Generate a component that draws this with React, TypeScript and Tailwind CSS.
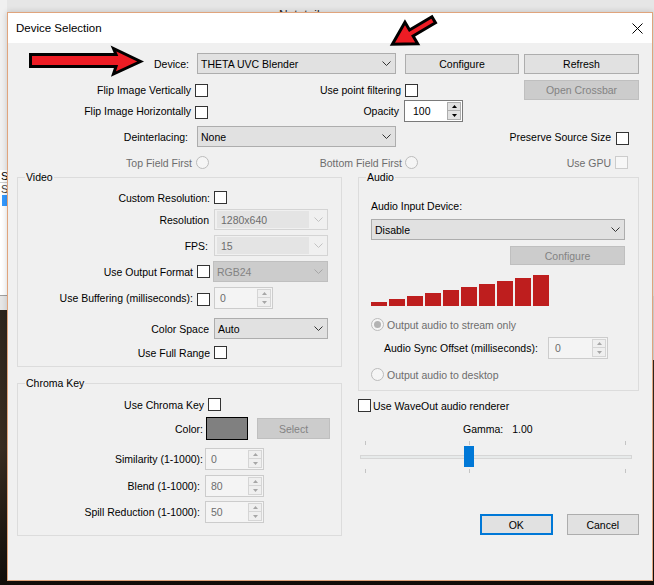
import React from "react";

type Kind = "normal" | "disabled" | "gray";

function Check({ disabled = false, className = "" }: { disabled?: boolean; className?: string }) {
  return (
    <div
      className={`w-[13px] h-[13px] shrink-0 border ${
        disabled ? "border-[#cccccc] bg-[#f7f7f7]" : "border-[#333333] bg-white"
      } ${className}`}
    />
  );
}

function Radio({ checked = false, className = "" }: { checked?: boolean; className?: string }) {
  return (
    <div
      className={`w-[13px] h-[13px] shrink-0 rounded-full border border-[#bcbcbc] bg-[#f5f5f5] flex items-center justify-center ${className}`}
    >
      {checked && <div className="w-[7px] h-[7px] rounded-full bg-[#b3b3b3]" />}
    </div>
  );
}

function Chevron({ color = "#333333" }: { color?: string }) {
  return (
    <svg width="9" height="5" viewBox="0 0 9 5">
      <polyline points="0.5,0.5 4.5,4.5 8.5,0.5" fill="none" stroke={color} strokeWidth="1" />
    </svg>
  );
}

function Combo({ value, kind = "normal", className = "" }: { value: string; kind?: Kind; className?: string }) {
  if (kind === "disabled") {
    return (
      <div className={`h-[21px] flex items-center border border-[#d4d4d4] bg-[#f0f0f0] ${className}`}>
        <div className="flex-1 h-[17px] ml-[2px] pl-[4px] flex items-center bg-[#e4e4e4] text-[#6d6d6d]">{value}</div>
        <div className="w-[18px] flex justify-center">
          <Chevron color="#c2c2c2" />
        </div>
      </div>
    );
  }
  if (kind === "gray") {
    return (
      <div className={`h-[21px] flex items-center border border-[#bfbfbf] bg-[#cccccc] text-[#838383] ${className}`}>
        <div className="flex-1 pl-[3px]">{value}</div>
        <div className="w-[18px] flex justify-center">
          <Chevron color="#a6a6a6" />
        </div>
      </div>
    );
  }
  return (
    <div className={`h-[21px] flex items-center border border-[#adadad] bg-[#e1e1e1] ${className}`}>
      <div className="flex-1 pl-[3px]">{value}</div>
      <div className="w-[18px] flex justify-center">
        <Chevron />
      </div>
    </div>
  );
}

function Btn({
  children,
  disabled = false,
  className = "",
}: {
  children: React.ReactNode;
  disabled?: boolean;
  className?: string;
}) {
  return (
    <button
      className={`flex items-center justify-center border ${
        disabled ? "bg-[#cccccc] border-[#bfbfbf] text-[#838383]" : "bg-[#e1e1e1] border-[#adadad]"
      } ${className}`}
    >
      {children}
    </button>
  );
}

function Tri({ up, color }: { up: boolean; color: string }) {
  return (
    <svg width="5" height="3" viewBox="0 0 5 3">
      <polygon points={up ? "0,3 2.5,0 5,3" : "0,0 5,0 2.5,3"} fill={color} />
    </svg>
  );
}

function Spin({
  value,
  disabled = false,
  className = "",
  textClass = "pl-[5px]",
}: {
  value: string;
  disabled?: boolean;
  className?: string;
  textClass?: string;
}) {
  const btn = disabled ? "border-[#d5d5d5] bg-[#efefef]" : "border-[#adadad] bg-[#e1e1e1]";
  const tri = disabled ? "#a6a6a6" : "#000000";
  return (
    <div
      className={`h-[22px] flex border ${
        disabled ? "border-[#cccccc] bg-[#f4f4f4] text-[#6d6d6d]" : "border-[#7a7a7a] bg-white"
      } ${className}`}
    >
      <div className={`flex-1 flex items-center ${textClass}`}>{value}</div>
      <div className="w-[14px] my-[1px] mr-[1px] flex flex-col">
        <div className={`h-[9px] border flex items-center justify-center ${btn}`}>
          <Tri up color={tri} />
        </div>
        <div className={`h-[9px] border border-t-0 flex items-center justify-center ${btn}`}>
          <Tri up={false} color={tri} />
        </div>
      </div>
    </div>
  );
}

function Group({ title, className = "", children }: { title: string; className?: string; children: React.ReactNode }) {
  return (
    <div className={`relative border border-[#dcdcdc] ${className}`}>
      <span className="absolute -top-[8px] left-[7px] px-[1px] bg-[#f0f0f0] leading-[14px]">{title}</span>
      {children}
    </div>
  );
}

const bars = [4, 7, 10, 13, 16, 19, 22, 25, 28, 31];

export default function App() {
  return (
    <div className="relative w-[654px] h-[585px] overflow-hidden bg-[#e6e6e6] font-['Liberation_Sans',Arial,sans-serif] text-[10.5px] leading-[14px] text-black">
      {/* desktop behind the dialog */}
      <div className="absolute left-[279px] top-[8px] text-[12px] text-[#222]">Notatnik</div>
      <div className="absolute left-0 top-0 w-[7px] h-[170px] bg-[#f0f0f0]" />
      <div className="absolute left-0 top-[170px] w-[7px] h-[126px] bg-white border-b border-[#a0a0a0] overflow-hidden text-[11px]">
        <div className="h-[13px] border-b border-[#cfcfcf] pl-[1px] leading-[13px]">S</div>
        <div className="pl-[1px] leading-[12px] text-[#444]">S</div>
        <div className="ml-[2px] w-[5px] h-[11px] bg-[#3399ff]" />
      </div>
      <div className="absolute left-0 top-[310px] w-[654px] h-[275px] bg-gradient-to-b from-[#2e251c] via-[#3a2d21] to-[#120e0a]" />
      <div className="absolute right-0 top-[296px] w-[1px] h-[64px] bg-[#d8d8d8]" />

      {/* dialog window */}
      <div className="absolute left-[7px] top-[12px] w-[646px] h-[569px] border border-[#e0a47c] bg-[#f0f0f0] shadow-[0_0_6px_rgba(0,0,0,0.18)] flex flex-col">
        <div className="h-[30px] shrink-0 bg-white flex items-center justify-between pl-[8px] pr-[9px]">
          <span className="text-[11.5px]">Device Selection</span>
          <svg width="11" height="11" viewBox="0 0 11 11">
            <path d="M0.5 0.5 L10.5 10.5 M10.5 0.5 L0.5 10.5" stroke="#000" strokeWidth="1" />
          </svg>
        </div>

        <div className="flex flex-col pt-[10px]">
          <div className="flex items-center h-[21px]">
            <div className="w-[184px] text-right pr-[3px]">Device:</div>
            <Combo className="ml-[5px] w-[199px]" value="THETA UVC Blender" />
            <Btn className="ml-[9px] w-[114px] h-[20px]">Configure</Btn>
            <Btn className="ml-[5px] w-[115px] h-[20px]">Refresh</Btn>
          </div>

          <div className="flex items-center h-[20px] mt-[6px]">
            <div className="w-[184px] text-right pr-[1px]">Flip Image Vertically</div>
            <Check className="ml-[3px]" />
            <div className="w-[194px] text-right pr-[1px]">Use point filtering</div>
            <Check className="ml-[3px]" />
            <Btn disabled className="ml-[106px] w-[115px] h-[20px]">
              Open Crossbar
            </Btn>
          </div>

          <div className="flex items-center h-[22px]">
            <div className="w-[184px] text-right pr-[1px]">Flip Image Horizontally</div>
            <Check className="ml-[3px] mt-[3px]" />
            <div className="w-[192px] text-right pr-[1px]">Opacity</div>
            <Spin className="ml-[4px] w-[59px]" value="100" textClass="pl-[8px]" />
          </div>

          <div className="flex items-center h-[21px] mt-[4px]">
            <div className="w-[184px] text-right pr-[4px]">Deinterlacing:</div>
            <Combo className="ml-[5px] w-[199px]" value="None" />
            <div className="w-[216px] text-right pr-[1px]">Preserve Source Size</div>
            <Check className="ml-[4px] mt-[4px]" />
          </div>

          <div className="flex items-center h-[13px] mt-[9px] text-[#6d6d6d]">
            <div className="w-[184px] text-right">Top Field First</div>
            <Radio className="ml-[4px]" />
            <div className="w-[193px] text-right">Bottom Field First</div>
            <Radio className="ml-[3px]" />
            <div className="w-[196px] text-right pr-[3px]">Use GPU</div>
            <Check disabled className="ml-[1px]" />
          </div>
        </div>

        <div className="flex mt-[8px] pl-[9px]">
          <div className="w-[325px] flex flex-col">
            <Group title="Video" className="h-[190px] flex flex-col">
              <div className="flex items-center h-[13px] mt-[13px]">
                <div className="w-[192px] text-right">Custom Resolution:</div>
                <Check className="ml-[4px]" />
              </div>
              <div className="flex items-center h-[21px] mt-[5px]">
                <div className="w-[192px] text-right pr-[1px]">Resolution</div>
                <Combo kind="disabled" className="ml-[4px] w-[114px]" value="1280x640" />
              </div>
              <div className="flex items-center h-[21px] mt-[5px]">
                <div className="w-[192px] text-right pr-[2px]">FPS:</div>
                <Combo kind="disabled" className="ml-[4px] w-[114px]" value="15" />
              </div>
              <div className="flex items-center h-[21px] mt-[5px]">
                <div className="w-[176px] text-right pr-[1px]">Use Output Format</div>
                <Check className="ml-[3px]" />
                <Combo kind="gray" className="ml-[3px] w-[115px]" value="RGB24" />
              </div>
              <div className="flex items-center h-[22px] mt-[5px]">
                <div className="w-[176px] text-right pr-[1px]">Use Buffering (milliseconds):</div>
                <Check className="ml-[3px] mt-[3px]" />
                <Spin disabled className="ml-[4px] w-[59px]" value="0" textClass="pl-[5px]" />
              </div>
              <div className="flex items-center h-[21px] mt-[9px]">
                <div className="w-[192px] text-right pr-[1px]">Color Space</div>
                <Combo className="ml-[4px] w-[114px]" value="Auto" />
              </div>
              <div className="flex items-center h-[13px] mt-[7px]">
                <div className="w-[192px] text-right">Use Full Range</div>
                <Check className="ml-[4px]" />
              </div>
            </Group>

            <Group title="Chroma Key" className="h-[153px] mt-[16px] flex flex-col">
              <div className="flex items-center h-[13px] mt-[14px]">
                <div className="w-[186px] text-right">Use Chroma Key</div>
                <Check className="ml-[4px]" />
              </div>
              <div className="flex items-center h-[23px] mt-[6px]">
                <div className="w-[186px] text-right pr-[1px]">Color:</div>
                <div className="ml-[2px] w-[42px] h-[23px] bg-[#808080] border border-black" />
                <Btn disabled className="ml-[9px] w-[73px] h-[21px]">
                  Select
                </Btn>
              </div>
              <div className="flex items-center h-[22px] mt-[8px]">
                <div className="w-[186px] text-right pr-[1px]">Similarity (1-1000):</div>
                <Spin disabled className="ml-[1px] w-[59px]" value="0" />
              </div>
              <div className="flex items-center h-[22px] mt-[5px]">
                <div className="w-[186px] text-right pr-[4px]">Blend (1-1000):</div>
                <Spin disabled className="ml-[1px] w-[59px]" value="80" />
              </div>
              <div className="flex items-center h-[22px] mt-[4px]">
                <div className="w-[186px] text-right pr-[4px]">Spill Reduction (1-1000):</div>
                <Spin disabled className="ml-[1px] w-[59px]" value="50" />
              </div>
            </Group>
          </div>

          <div className="ml-[16px] w-[281px] flex flex-col">
            <Group title="Audio" className="h-[214px] flex flex-col pl-[12px] pr-[13px]">
              <div className="mt-[21px]">Audio Input Device:</div>
              <Combo className="mt-[6px] w-[254px]" value="Disable" />
              <Btn disabled className="mt-[6px] self-end w-[115px] h-[19px]">
                Configure
              </Btn>
              <div className="mt-[10px] h-[31px] flex items-end gap-[2px]">
                {bars.map((h) => (
                  <div key={h} className="w-[16px] bg-[#be1e1e]" style={{ height: h }} />
                ))}
              </div>
              <div className="mt-[12px] flex items-center h-[13px] text-[#6d6d6d]">
                <Radio checked />
                <span className="ml-[3px]">Output audio to stream only</span>
              </div>
              <div className="mt-[6px] flex items-center h-[22px]">
                <div className="ml-[13px] w-[164px]">Audio Sync Offset (milliseconds):</div>
                <Spin disabled className="w-[60px]" value="0" textClass="pl-[6px]" />
              </div>
              <div className="mt-[9px] flex items-center h-[13px] text-[#6d6d6d]">
                <Radio />
                <span className="ml-[3px]">Output audio to desktop</span>
              </div>
            </Group>

            <div className="mt-[8px] flex items-center h-[13px]">
              <Check />
              <span className="ml-[2px]">Use WaveOut audio renderer</span>
            </div>

            <div className="mt-[9px] h-[15px] flex items-center">
              <span className="ml-[105px]">Gamma:</span>
              <span className="ml-[9px]">1.00</span>
            </div>

            <div className="mt-[5px] ml-[2px] relative w-[272px] h-[33px]">
              <div className="absolute left-[5px] top-0 w-[1px] h-[4px] bg-[#c4c4c4]" />
              <div className="absolute left-[109px] top-0 w-[1px] h-[4px] bg-[#c4c4c4]" />
              <div className="absolute left-[265px] top-0 w-[1px] h-[4px] bg-[#c4c4c4]" />
              <div className="absolute left-0 top-[14px] w-[272px] h-[4px] border border-[#d6d6d6] bg-[#e7eaea]" />
              <div className="absolute left-[104px] top-[5px] w-[10px] h-[21px] bg-[#0078d7]" />
              <div className="absolute left-[5px] top-[28px] w-[1px] h-[4px] bg-[#c4c4c4]" />
              <div className="absolute left-[109px] top-[28px] w-[1px] h-[4px] bg-[#c4c4c4]" />
              <div className="absolute left-[265px] top-[28px] w-[1px] h-[4px] bg-[#c4c4c4]" />
            </div>

            <div className="mt-[40px] flex">
              <button className="ml-[122px] w-[73px] h-[21px] border-2 border-[#0078d7] bg-[#e1e1e1]">OK</button>
              <button className="ml-[14px] w-[73px] h-[21px] border border-[#adadad] bg-[#e1e1e1]">Cancel</button>
            </div>
          </div>
        </div>
      </div>

      {/* annotation arrows drawn over the screenshot */}
      <svg className="absolute left-0 top-0 pointer-events-none" width="654" height="90" viewBox="0 0 654 90">
        <polygon
          points="30.5,54.5 116,54.5 113.5,48.5 140.5,61.5 113.5,74 116,66.5 30.5,66.5"
          fill="#ed1c24"
          stroke="#000"
          strokeWidth="3"
          strokeLinejoin="miter"
        />
        <polygon
          points="0,-3.5 26,-3.5 26,-12.5 48,0 26,12.5 26,3.5 0,3.5"
          transform="translate(433.7 19.8) rotate(149.4)"
          fill="#ed1c24"
          stroke="#000"
          strokeWidth="3"
          strokeLinejoin="miter"
        />
      </svg>
    </div>
  );
}
